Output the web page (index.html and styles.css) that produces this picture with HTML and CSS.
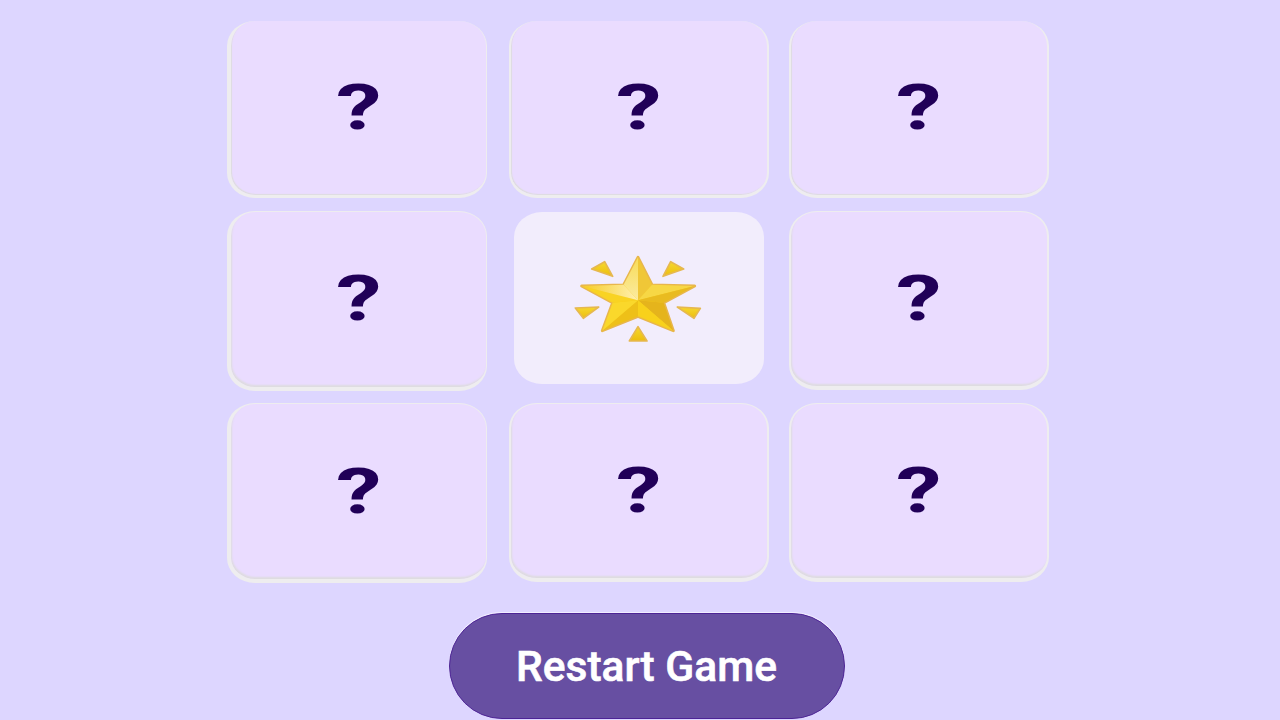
FILE: index.html
```html
<!DOCTYPE html>
<html lang="en">
<head>
	<meta charset="utf-8">
	<title>Memory Game</title>
	<link rel="stylesheet" href="styles.css">
</head>
<body>
	<div class="board">
		<div class="card top left"><span class="mark">?</span></div>
		<div class="card top"><span class="mark">?</span></div>
		<div class="card top"><span class="mark">?</span></div>

		<div class="card left"><span class="mark">?</span></div>
		<div class="card open">
			<svg class="star" viewBox="0 0 480 360">
				<defs>
					<linearGradient id="ray" x1="0" y1="0" x2="0" y2="1">
						<stop offset="0" stop-color="#f6d82e"/>
						<stop offset="1" stop-color="#ecbd0e"/>
					</linearGradient>
					<linearGradient id="light" x1="0" y1="0" x2="1" y2="0">
						<stop offset="0" stop-color="#f6cc24"/>
						<stop offset="1" stop-color="#fff0b0"/>
					</linearGradient>
					<linearGradient id="peak" x1="0" y1="0" x2="0" y2="1">
						<stop offset="0" stop-color="#f8dc58"/>
						<stop offset="1" stop-color="#fbeba0"/>
					</linearGradient>
				</defs>
				<g fill="url(#ray)" stroke="#e6b850" stroke-width="5" stroke-linejoin="round">
					<path d="M95 87L134 65L158 109Z"/>
					<path d="M332 65L371 87L309 109Z"/>
					<path d="M46 204L116 201L70 235Z"/>
					<path d="M352 201L421 205L402 235Z"/>
					<path d="M234 260L261 303L208 303Z"/>
				</g>
				<path fill="#f7ce1d" stroke="#e8b64c" stroke-width="9" stroke-linejoin="round" d="M234 52L276 135L404 138L311 188L340 272L234 229L127 272L158 188L65 138L191 135Z"/>
				<path fill="url(#peak)" d="M234 52L191 134L234 181Z"/>
				<path fill="#f0c737" d="M234 52L276 134L234 181Z"/>
				<path fill="#f7d745" d="M276 134L404 138L234 181Z"/>
				<path fill="#e9bb20" d="M404 138L311 188L234 181Z"/>
				<path fill="#e5b41c" d="M311 188L340 272L234 181Z"/>
				<path fill="#f8d11b" d="M340 272L234 229L234 181Z"/>
				<path fill="#eec018" d="M234 229L127 272L234 181Z"/>
				<path fill="#fad82b" d="M127 272L158 188L234 181Z"/>
				<path fill="#f9d322" d="M158 188L65 138L234 181Z"/>
				<path fill="url(#light)" d="M65 138L191 134L234 181Z"/>
			</svg>
		</div>
		<div class="card middle"><span class="mark">?</span></div>

		<div class="card left"><span class="mark">?</span></div>
		<div class="card middle"><span class="mark">?</span></div>
		<div class="card middle"><span class="mark">?</span></div>
	</div>
	<button class="restart">Restart Game</button>
</body>
</html>
```
FILE: styles.css
```css
* { box-sizing: border-box; }
body {
	margin: 0;
	height: 720px;
	overflow: hidden;
	background: #ddd6ff;
	font-family: Roboto, "Liberation Sans", sans-serif;
}

.board {
	display: grid;
	grid-template-columns: 261px 260px 260px;
	grid-template-rows: 177px 180px 180px;
	column-gap: 20.5px;
	row-gap: 12.5px;
	margin: 21px 0 0 227px;
}
.card {
	display: flex;
	align-items: center;
	justify-content: center;
	border: 2px solid #eeedef;
	border-top-width: 1px;
	border-bottom-width: 4px;
	border-radius: 28px / 25px;
	background: #eadcff;
	box-shadow: inset 1px -2px 2px #dedce0;
}
.left {
	width: 260px;
	border-left-width: 4px;
	border-right-width: 1px;
}
.top {
	border-top-width: 0;
	border-bottom-width: 3px;
	box-shadow: inset 1px -1px 1px #dedce0;
}
.middle { height: 179px; }
.open {
	width: 250px;
	height: 172px;
	margin: 1px 0 0 5px;
	border: 0;
	background: #f2edfc;
	box-shadow: none;
}

.mark {
	color: #210058;
	font-size: 63px;
	font-weight: 700;
	line-height: 64px;
	transform: scaleX(1.45);
}
.star {
	width: 160px;
	height: 120px;
	margin: 4px 0 0 3px;
}

.restart {
	display: block;
	width: 396px;
	height: 106px;
	margin: 30px 0 0 448.5px;
	padding: 0;
	border: 1px solid #4d2496;
	border-radius: 53px;
	background: #674fa2;
	box-shadow: 0 -1px 0 #f1edff;
	color: #fff;
	font-family: inherit;
	font-size: 42.5px;
	font-weight: 500;
	-webkit-text-stroke: 0.6px #fff;
}
```
